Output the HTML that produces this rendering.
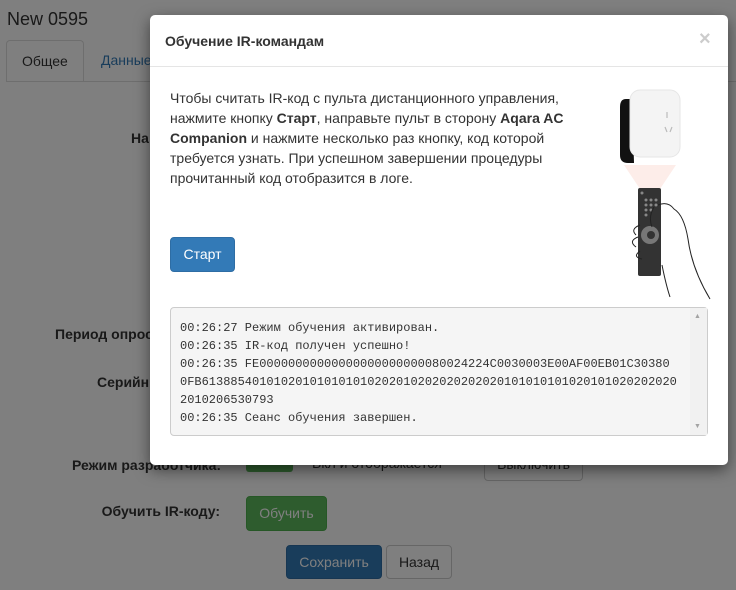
<!DOCTYPE html>
<html><head><meta charset="utf-8"><style>
*{box-sizing:border-box;margin:0;padding:0}
body{width:736px;height:590px;overflow:hidden;background:#fff;font-family:"Liberation Sans","DejaVu Sans",sans-serif;font-size:14px;color:#333;position:relative}
.abs{position:absolute}
.lbl{position:absolute;font-weight:bold;text-align:right;width:220px;left:0}
.btn{position:absolute;border-radius:4px;border:1px solid;text-align:center;font-size:14px}
.ov{position:absolute;left:0;top:0;width:736px;height:590px;background:rgba(0,0,0,.5)}
.modal{position:absolute;left:150px;top:15px;width:578px;height:450px;background:#fff;border-radius:5px;box-shadow:0 5px 15px rgba(0,0,0,.5)}
.log{position:absolute;left:20px;top:292px;width:538px;height:129px;background:#f5f5f5;border:1px solid #ccc;border-radius:4px;font-family:"Liberation Mono","DejaVu Sans Mono",monospace;font-size:12px;line-height:18px;padding:11px 9px;color:#333;white-space:pre}
</style></head><body>
<div class="abs" style="left:7px;top:9px;font-size:18px">New 0595</div>
<div class="abs" style="left:6px;top:40px;width:78px;height:42px;border:1px solid #ddd;border-bottom:none;border-radius:4px 4px 0 0;padding:12px 15px">Общее</div>
<div class="abs" style="left:101px;top:52px;color:#337ab7">Данные</div>
<div class="abs" style="left:6px;top:81px;width:730px;border-top:1px solid #ddd"></div>
<div class="abs" style="left:131px;top:130px;font-weight:bold">На</div>
<div class="lbl" style="top:326px;text-align:left;padding-left:55px;width:260px">Период опроса</div>
<div class="lbl" style="top:374px;text-align:left;padding-left:97px;width:260px">Серийный</div>
<div class="lbl" style="top:457px;text-align:left;padding-left:72px;width:300px">Режим разработчика:</div>
<div class="abs" style="left:246px;top:455px;width:47px;height:17px;background:#5cb85c;border-radius:3px"></div>
<div class="abs" style="left:312px;top:455px">Вкл и отображается</div>
<div class="btn" style="left:484px;top:447px;width:99px;height:34px;border-color:#ccc;padding-top:8px">Выключить</div>
<div class="lbl" style="top:503px">Обучить IR-коду:</div>
<div class="btn" style="left:246px;top:496px;width:81px;height:35px;background:#5cb85c;border-color:#4cae4c;color:#fff;padding-top:8px">Обучить</div>
<div class="btn" style="left:286px;top:545px;width:96px;height:34px;background:#337ab7;border-color:#2e6da4;color:#fff;padding-top:8px">Сохранить</div>
<div class="btn" style="left:386px;top:545px;width:66px;height:34px;border-color:#ccc;padding-top:8px">Назад</div>
<div class="ov"></div>
<div class="modal">
 <div class="abs" style="left:15px;top:18px;font-weight:bold;font-size:14px;color:#333">Обучение IR-командам</div>
 <div class="abs" style="left:549px;top:13px;font-size:20px;font-weight:bold;color:#ccc">×</div>
 <div class="abs" style="left:0;top:51px;width:578px;border-top:1px solid #e5e5e5"></div>
 <div class="abs" style="left:20px;top:73px;width:420px;line-height:20px">Чтобы считать IR-код с пульта дистанционного управления, нажмите кнопку <b>Старт</b>, направьте пульт в сторону <b>Aqara AC Companion</b> и нажмите несколько раз кнопку, код которой требуется узнать. При успешном завершении процедуры прочитанный код отобразится в логе.</div>
 <svg class="abs" style="left:460px;top:70px" width="110" height="215" viewBox="0 0 110 215">
  <path d="M22 14h-6q-6 0 -6 8v48q0 8 8 8h6z" fill="#111"/>
  <rect x="20" y="5" width="50" height="67" rx="10" fill="#f4f4f4" stroke="#e6e6e6"/>
  <path d="M57 27v6M55 42l2 5M62 42l-2 5" stroke="#bbb" stroke-width="1.2"/>
  <path d="M14 80h52l-20 30h-12z" fill="#fde9e4" opacity=".8"/>
  <rect x="28" y="103" width="23" height="88" rx="2" fill="#333"/>
  <g fill="#888"><circle cx="32" cy="108" r="1.5"/><circle cx="36" cy="115" r="1.5"/><circle cx="41" cy="115" r="1.5"/><circle cx="46" cy="115" r="1.5"/><circle cx="36" cy="120" r="1.5"/><circle cx="41" cy="120" r="1.5"/><circle cx="46" cy="120" r="1.5"/><circle cx="36" cy="125" r="1.5"/><circle cx="41" cy="125" r="1.5"/><circle cx="36" cy="130" r="1.5"/></g>
  <circle cx="40" cy="150" r="9" fill="#777"/><circle cx="41" cy="150" r="4" fill="#333"/>
  <path d="M48 120q10 -4 16 4q10 6 14 30q4 30 22 60M44 122q-6 10 -2 20M30 140q-10 4 -4 10M28 152q-10 4 -2 10M30 166q-8 6 2 8M52 180q4 20 8 32" fill="none" stroke="#222" stroke-width="1"/>
 </svg>
 <div class="btn" style="left:20px;top:222px;width:65px;height:35px;background:#337ab7;border-color:#2e6da4;color:#fff;padding-top:8px">Старт</div>
 <div class="log">00:26:27 Режим обучения активирован.
00:26:35 IR-код получен успешно!
00:26:35 FE00000000000000000000000080024224C0030003E00AF00EB01C30380
0FB613885401010201010101010202010202020202020101010101020101020202020
2010206530793
00:26:35 Сеанс обучения завершен.</div>
 <div class="abs" style="left:540px;top:293px;width:17px;height:127px;background:#f1f1f1"></div>
 <div class="abs" style="left:544px;top:298px;font-size:7px;color:#a3a3a3">▲</div>
 <div class="abs" style="left:544px;top:408px;font-size:7px;color:#a3a3a3">▼</div>
</div>
</body></html>
